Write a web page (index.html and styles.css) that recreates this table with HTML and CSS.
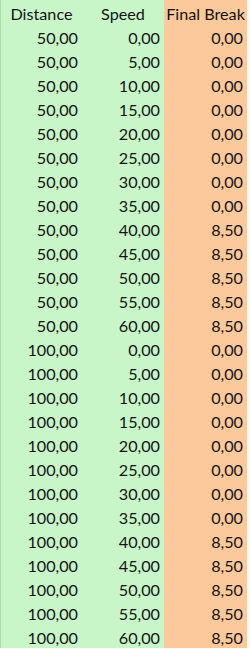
FILE: index.html
```html
<!DOCTYPE html>
<html>
<head>
<meta charset="utf-8">
<link rel="stylesheet" href="styles.css">
</head>
<body>
<div class="sheet">
  <div class="cell head dist">Distance</div>
  <div class="cell head speed">Speed</div>
  <div class="cell head brk">Final Break</div>

  <div class="cell dist">50,00</div><div class="cell speed">0,00</div><div class="cell brk">0,00</div>
  <div class="cell dist">50,00</div><div class="cell speed">5,00</div><div class="cell brk">0,00</div>
  <div class="cell dist">50,00</div><div class="cell speed">10,00</div><div class="cell brk">0,00</div>
  <div class="cell dist">50,00</div><div class="cell speed">15,00</div><div class="cell brk">0,00</div>
  <div class="cell dist">50,00</div><div class="cell speed">20,00</div><div class="cell brk">0,00</div>
  <div class="cell dist">50,00</div><div class="cell speed">25,00</div><div class="cell brk">0,00</div>
  <div class="cell dist">50,00</div><div class="cell speed">30,00</div><div class="cell brk">0,00</div>
  <div class="cell dist">50,00</div><div class="cell speed">35,00</div><div class="cell brk">0,00</div>
  <div class="cell dist">50,00</div><div class="cell speed">40,00</div><div class="cell brk">8,50</div>
  <div class="cell dist">50,00</div><div class="cell speed">45,00</div><div class="cell brk">8,50</div>
  <div class="cell dist">50,00</div><div class="cell speed">50,00</div><div class="cell brk">8,50</div>
  <div class="cell dist">50,00</div><div class="cell speed">55,00</div><div class="cell brk">8,50</div>
  <div class="cell dist">50,00</div><div class="cell speed">60,00</div><div class="cell brk">8,50</div>
  <div class="cell dist">100,00</div><div class="cell speed">0,00</div><div class="cell brk">0,00</div>
  <div class="cell dist">100,00</div><div class="cell speed">5,00</div><div class="cell brk">0,00</div>
  <div class="cell dist">100,00</div><div class="cell speed">10,00</div><div class="cell brk">0,00</div>
  <div class="cell dist">100,00</div><div class="cell speed">15,00</div><div class="cell brk">0,00</div>
  <div class="cell dist">100,00</div><div class="cell speed">20,00</div><div class="cell brk">0,00</div>
  <div class="cell dist">100,00</div><div class="cell speed">25,00</div><div class="cell brk">0,00</div>
  <div class="cell dist">100,00</div><div class="cell speed">30,00</div><div class="cell brk">0,00</div>
  <div class="cell dist">100,00</div><div class="cell speed">35,00</div><div class="cell brk">0,00</div>
  <div class="cell dist">100,00</div><div class="cell speed">40,00</div><div class="cell brk">8,50</div>
  <div class="cell dist">100,00</div><div class="cell speed">45,00</div><div class="cell brk">8,50</div>
  <div class="cell dist">100,00</div><div class="cell speed">50,00</div><div class="cell brk">8,50</div>
  <div class="cell dist">100,00</div><div class="cell speed">55,00</div><div class="cell brk">8,50</div>
  <div class="cell dist">100,00</div><div class="cell speed">60,00</div><div class="cell brk">8,50</div>
</div>
</body>
</html>
```

FILE: styles.css
```css
html, body {
  margin: 0;
  padding: 0;
  background: #fafaf0;
}
.sheet {
  display: grid;
  grid-template-columns: 82px 82px 83px;
  grid-auto-rows: 24px;
  font-family: Lato, "Open Sans", sans-serif;
  font-size: 16.2px;
  color: #141414;
  width: 247px;
}
.cell {
  line-height: 24px;
  text-align: right;
  padding-right: 4px;
  padding-top: 2px;
  height: 24px;
  box-sizing: border-box;
  white-space: nowrap;
}
.dist {
  background: #c8f6c9;
  border-left: 1px solid #aed8b0;
}
.speed {
  background: #c8f6c9;
}
.brk {
  background: #fcc99c;
}
.head {
  text-align: center;
  padding-right: 0;
}
```
